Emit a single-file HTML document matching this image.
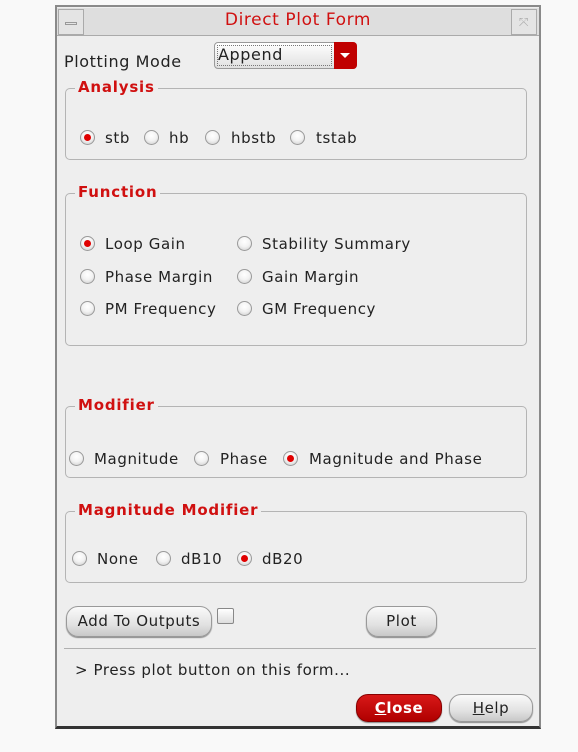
<!DOCTYPE html>
<html><head><meta charset="utf-8"><style>
*{margin:0;padding:0;box-sizing:border-box}
body{width:578px;height:752px;background:#f9f9f9;position:relative;overflow:hidden;font-family:"DejaVu Sans","Liberation Sans",sans-serif;font-size:15px;color:#222;letter-spacing:0.6px}
.a{position:absolute;white-space:nowrap}
#win{position:absolute;left:55px;top:5px;width:486px;height:724px;background:#eeeeee;border:2px solid #8a8a8a;border-bottom:3px solid #333}
.box{position:absolute;border:1px solid #b4b4b4;border-radius:5px}
.lg{position:absolute;color:#d01010;font-weight:bold;font-size:15px;background:#eeeeee;padding:0 3px;letter-spacing:0.8px}
.r{position:absolute;width:15px;height:15px;border-radius:50%;background:radial-gradient(circle at 50% 35%,#fff 0%,#f2f2f2 50%,#c8c8c8 100%);border:1px solid #9a9a9a}
.r.on::after{content:"";position:absolute;left:3px;top:3px;width:7px;height:7px;border-radius:50%;background:#e00000}
.btn{position:absolute;border:1px solid #999;border-radius:12px;background:linear-gradient(#fafafa,#e2e2e2 60%,#c8c8c8);text-align:center;font-size:15px;box-shadow:0 1px 1px #888}
</style></head><body>
<div id="win">
  <div class="a" style="left:0;top:1px;width:482px;height:28px;background:#dedede;border-bottom:1px solid #aaa"></div>
  <div class="a" style="left:1px;top:2px;width:26px;height:26px;border:1px solid #aaa;background:#e4e4e4"></div>
  <div class="a" style="left:8px;top:15px;width:12px;height:3px;border:1px solid #999"></div>
  <div class="a" style="left:454px;top:2px;width:26px;height:26px;border:1px solid #aaa;background:#e4e4e4;color:#aaa;font-size:12px;text-align:center;line-height:24px">⤧</div>
  <div class="a" style="left:0;width:482px;top:3px;text-align:center;color:#d01010;font-size:17px">Direct Plot Form</div>
</div>
<div class="a" style="left:64px;top:52px;font-size:16px">Plotting Mode</div>
<div class="a" style="left:214px;top:42px;width:143px;height:27px;border:1px solid #999;border-radius:4px;background:linear-gradient(#fff,#e0e0e0)"></div>
<div class="a" style="left:217px;top:45px;width:115px;height:21px;border:1px dotted #777"></div>
<div class="a" style="left:218px;top:45px;font-size:16px">Append</div>
<div class="a" style="left:334px;top:42px;width:23px;height:27px;background:#c00000;border-radius:0 4px 4px 0"></div>
<div class="a" style="left:340px;top:53px;width:0;height:0;border-left:5px solid transparent;border-right:5px solid transparent;border-top:5px solid #fff"></div>

<div class="box" style="left:65px;top:88px;width:462px;height:72px"></div>
<div class="lg" style="left:75px;top:78px">Analysis</div>
<div class="r on" style="left:80px;top:130px"></div><div class="a" style="left:105px;top:129px">stb</div>
<div class="r" style="left:144px;top:130px"></div><div class="a" style="left:169px;top:129px">hb</div>
<div class="r" style="left:205px;top:130px"></div><div class="a" style="left:231px;top:129px">hbstb</div>
<div class="r" style="left:290px;top:130px"></div><div class="a" style="left:316px;top:129px">tstab</div>

<div class="box" style="left:65px;top:193px;width:462px;height:153px"></div>
<div class="lg" style="left:75px;top:183px">Function</div>
<div class="r on" style="left:80px;top:236px"></div><div class="a" style="left:105px;top:235px">Loop Gain</div>
<div class="r" style="left:80px;top:269px"></div><div class="a" style="left:105px;top:268px">Phase Margin</div>
<div class="r" style="left:80px;top:301px"></div><div class="a" style="left:105px;top:300px">PM Frequency</div>
<div class="r" style="left:237px;top:236px"></div><div class="a" style="left:262px;top:235px">Stability Summary</div>
<div class="r" style="left:237px;top:269px"></div><div class="a" style="left:262px;top:268px">Gain Margin</div>
<div class="r" style="left:237px;top:301px"></div><div class="a" style="left:262px;top:300px">GM Frequency</div>

<div class="box" style="left:65px;top:406px;width:462px;height:72px"></div>
<div class="lg" style="left:75px;top:396px">Modifier</div>
<div class="r" style="left:69px;top:451px"></div><div class="a" style="left:94px;top:450px">Magnitude</div>
<div class="r" style="left:194px;top:451px"></div><div class="a" style="left:220px;top:450px">Phase</div>
<div class="r on" style="left:283px;top:451px"></div><div class="a" style="left:309px;top:450px">Magnitude and Phase</div>

<div class="box" style="left:65px;top:511px;width:462px;height:72px"></div>
<div class="lg" style="left:75px;top:501px">Magnitude Modifier</div>
<div class="r" style="left:72px;top:551px"></div><div class="a" style="left:97px;top:550px">None</div>
<div class="r" style="left:156px;top:551px"></div><div class="a" style="left:181px;top:550px">dB10</div>
<div class="r on" style="left:237px;top:551px"></div><div class="a" style="left:262px;top:550px">dB20</div>

<div class="btn" style="left:66px;top:606px;width:146px;height:31px;line-height:29px">Add To Outputs</div>
<div class="a" style="left:217px;top:608px;width:17px;height:16px;border:1px solid #888;border-radius:2px;background:linear-gradient(#fff,#ddd)"></div>
<div class="btn" style="left:366px;top:606px;width:71px;height:31px;line-height:29px">Plot</div>
<div class="a" style="left:64px;top:648px;width:472px;height:1px;background:#b0b0b0"></div>
<div class="a" style="left:75px;top:661px">&gt; Press plot button on this form...</div>
<div class="btn" style="left:356px;top:694px;width:86px;height:28px;line-height:26px;background:linear-gradient(#d81818,#b00000);color:#fff;font-weight:bold;border-color:#800"><u>C</u>lose</div>
<div class="btn" style="left:449px;top:694px;width:84px;height:28px;line-height:26px"><u>H</u>elp</div>
</body></html>
